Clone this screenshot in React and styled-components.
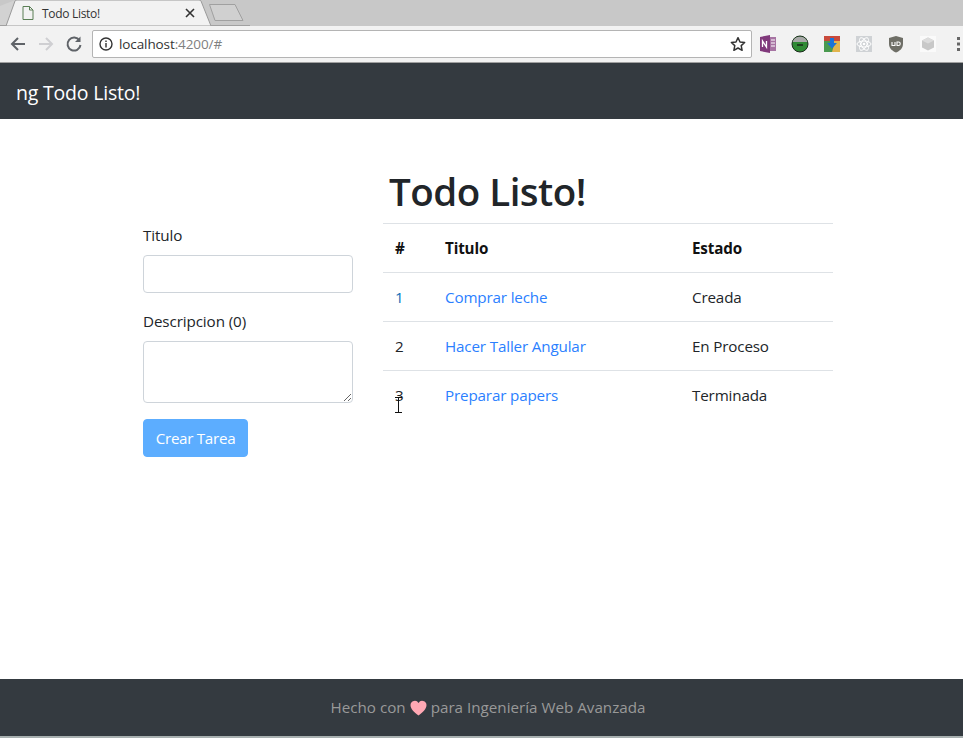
import React from "react";
import styled, { createGlobalStyle } from "styled-components";

const Global = createGlobalStyle`
  html, body { margin: 0; padding: 0; background: #fff; }
  body { font-family: "Open Sans", "Liberation Sans", sans-serif; font-size: 15px; color: #212529; }
  * { box-sizing: border-box; }
`;
const Page = styled.div`
  width: 963px; height: 738px; display: flex; flex-direction: column; overflow: hidden; background: #fff;
`;
const TabStrip = styled.div`
  height: 26px; background: #c8c8c8; display: flex; align-items: flex-end; flex: none; position: relative;
`;
const TabShape = styled.svg`
  position: absolute; left: 0; top: 0; width: 250px; height: 26px;
`;
const TabRow = styled.div`
  position: relative; display: flex; align-items: center; height: 26px; width: 212px; padding-left: 22px;
`;
const TabTitle = styled.span`
  font-size: 12px; color: #333; margin-left: 8px; flex: 1; letter-spacing: -0.3px;
`;
const Toolbar = styled.div`
  height: 37px; flex: none; background: #f2f2f2; border-bottom: 1px solid #a0a0a0;
  display: flex; align-items: center; padding-left: 8px;
`;
const NavIcon = styled.svg`
  width: 20px; height: 20px; flex: none; margin-right: 8px;
`;
const Omnibox = styled.div`
  width: 660px; height: 28px; background: #fff; border: 1px solid #b4b4b4; border-radius: 2px;
  display: flex; align-items: center; padding: 0 5px 0 6px; flex: none; margin-top: -1px;
`;
const Url = styled.span`
  font-size: 13.5px; margin-left: 6px; flex: 1; color: #333; letter-spacing: -0.1px;
  & em { font-style: normal; color: #808080; }
`;
const Extensions = styled.div`
  display: flex; align-items: center; flex: 1; padding-left: 6px; gap: 12px;
`;
const Ext = styled.svg`
  width: 20px; height: 20px; flex: none; display: block;
`;
const MenuDots = styled.svg`
  width: 4px; height: 16px; flex: none; display: block; margin-left: 7px;
`;
const Navbar = styled.header`
  height: 56px; flex: none; background: #343a40; color: #fff; display: flex; align-items: center;
  padding: 2px 0 0 16px; font-size: 19.5px; letter-spacing: -0.2px;
`;
const Main = styled.main`
  flex: 1; display: flex; padding-left: 143px; align-items: flex-start;
`;
const FormCol = styled.form`
  width: 210px; margin-top: 104px; margin-right: 30px; flex: none; display: flex; flex-direction: column;
`;
const Label = styled.label`
  display: block; height: 24px; line-height: 24px; font-size: 15.2px; margin-bottom: 8px; letter-spacing: -0.1px;
`;
const TextInput = styled.input`
  display: block; width: 210px; height: 38px; border: 1px solid #ced4da; border-radius: 4px; background: #fff;
  margin-bottom: 16px; outline: none; padding: 0;
`;
const TextArea = styled.textarea`
  display: block; width: 210px; height: 62px; border: 1px solid #ced4da; border-radius: 4px; background: #fff;
  margin-bottom: 16px; outline: none; padding: 0; resize: vertical;
`;
const Submit = styled.button`
  width: 105px; height: 38px; border: 1px solid #5cadff; border-radius: 4px; background: #5cadff; color: #fff;
  font: inherit; font-size: 15.2px; padding: 0; letter-spacing: -0.3px;
`;
const ListCol = styled.section`
  width: 450px; flex: none; margin-top: 48px;
`;
const Title = styled.h1`
  margin: 0; padding: 0 0 8px 6px; font-size: 38.5px; font-weight: 600; line-height: 48px; color: #212529; letter-spacing: -0.5px;
`;
const Table = styled.table`
  width: 450px; border-collapse: collapse; table-layout: fixed; font-size: 15.2px; color: #212529; letter-spacing: -0.15px;
`;
const Th = styled.th`
  height: 49px; padding: 0 12px; text-align: left; font-weight: 700; border-top: 1px solid #dee2e6; color: #111;
  width: ${p => p.$w}px;
`;
const Td = styled.td`
  height: 49px; padding: 0 12px; border-top: 1px solid #dee2e6; color: ${p => p.$blue ? "#0b6fb8" : "#212529"};
`;
const Link = styled.a`
  color: #2b7fff; text-decoration: none;
`;
const Footer = styled.footer`
  height: 57px; flex: none; background: #343a40; color: #999; display: flex; align-items: center; justify-content: center;
  font-size: 15.2px; padding: 0 0 2px 13px;
`;
const Heart = styled.svg`
  width: 17px; height: 16px; margin: 2px 4px 0; display: block; flex: none;
`;
const BottomEdge = styled.div`
  height: 2px; flex: none; background: #a8b0b0;
`;
const Cursor = styled.svg`
  position: absolute; left: 394px; top: 397px; width: 9px; height: 16px;
`;

const rows = [
  { n: 1, t: "Comprar leche", s: "Creada" },
  { n: 2, t: "Hacer Taller Angular", s: "En Proceso" },
  { n: 3, t: "Preparar papers", s: "Terminada" },
];

export default function App() {
  return (
    <Page>
      <Global />
      <TabStrip>
        <TabShape viewBox="0 0 250 26">
          <path d="M0 6 L14 0.5 L14 26 L0 26Z" fill="#d2d2d2" />
          <path d="M6 26 L15 1 Q15.500 0 17 0 L199 0 Q200.500 0 201 1 L211 26Z" fill="#f2f2f2" stroke="#9a9a9a" strokeWidth="1" />
          <path d="M209.500 4.500 L235 4.500 L243 20.500 L215 20.500Z" fill="#d0d0d0" stroke="#a0a0a0" strokeWidth="1" strokeLinejoin="round" />
          <path d="M0 25.500H6M211 25.500H250" stroke="#a0a0a0" />
        </TabShape>
        <TabRow>
          <svg width="12" height="14" viewBox="0 0 12 14" fill="none" stroke="#5a7f55" strokeWidth="1">
            <path d="M1 .5H7.500L11 4V13.500H1Z" />
            <path d="M7.500 .5V4H11" />
          </svg>
          <TabTitle>Todo Listo!</TabTitle>
          <svg width="10" height="10" viewBox="0 0 10 10" stroke="#333" strokeWidth="1.600" style={{ marginRight: 17 }}>
            <path d="M1 1L9 9M9 1L1 9" />
          </svg>
        </TabRow>
      </TabStrip>
      <Toolbar>
        <NavIcon viewBox="0 0 20 20" fill="none" stroke="#5f6368" strokeWidth="2">
          <path d="M17 10H4M10 4L4 10L10 16" />
        </NavIcon>
        <NavIcon viewBox="0 0 20 20" fill="none" stroke="#cfcfd2" strokeWidth="2">
          <path d="M3 10H16M10 4L16 10L10 16" />
        </NavIcon>
        <NavIcon viewBox="0 0 20 20" fill="none" stroke="#5f6368" strokeWidth="2">
          <path d="M15.500 6.500A6.500 6.500 0 1 0 16.500 11" />
          <path d="M16.500 2.500V8H11" fill="#5f6368" stroke="none" />
        </NavIcon>
        <Omnibox>
          <svg width="14" height="14" viewBox="0 0 14 14" fill="none" stroke="#333" strokeWidth="1.400">
            <circle cx="7" cy="7" r="6" />
            <path d="M7 6V10.500M7 3.400V5" />
          </svg>
          <Url>localhost<em>:4200/#</em></Url>
          <svg width="16" height="16" viewBox="0 0 24 24" fill="none" stroke="#333" strokeWidth="2.200" strokeLinejoin="round">
            <path d="M12 2.500L15 9L22 9.800L16.800 14.500L18.200 21.500L12 18L5.800 21.500L7.200 14.500L2 9.800L9 9Z" />
          </svg>
        </Omnibox>
        <Extensions>
          <Ext viewBox="0 0 20 20">
            <path d="M2 3L12 1V19L2 17Z" fill="#80397b" />
            <rect x="12" y="3" width="6" height="14" fill="#a774a3" />
            <path d="M13 6H17M13 9H17M13 12H17" stroke="#fff" strokeWidth="1" />
            <path d="M4.500 13V7L8.500 13V7" stroke="#fff" strokeWidth="1.300" fill="none" />
          </Ext>
          <Ext viewBox="0 0 20 20">
            <circle cx="10" cy="10" r="8" fill="#2f8a34" stroke="#1b2a1c" strokeWidth="1" />
            <path d="M2.500 8A8 8 0 0 1 17.500 8Z" fill="#a8a8a8" />
            <path d="M7 11H13" stroke="#111" strokeWidth="1.200" />
          </Ext>
          <Ext viewBox="0 0 20 20">
            <rect x="2" y="2" width="16" height="16" fill="#e2b44c" />
            <path d="M2 2H18V7H12V11L10 18H2Z" fill="#4a9a4f" />
            <path d="M2 2H18V7H2Z" fill="#c94a3c" />
            <path d="M8 4H12V9H15L10 14.500L5 9H8Z" fill="#1a73d8" />
          </Ext>
          <Ext viewBox="0 0 20 20">
            <rect x="2" y="2" width="16" height="16" fill="#cfd2d5" />
            <g fill="none" stroke="#fff" strokeWidth="1">
              <ellipse cx="10" cy="10" rx="7" ry="3" />
              <ellipse cx="10" cy="10" rx="7" ry="3" transform="rotate(60 10 10)" />
              <ellipse cx="10" cy="10" rx="7" ry="3" transform="rotate(120 10 10)" />
            </g>
            <circle cx="10" cy="10" r="1.300" fill="#fff" />
          </Ext>
          <Ext viewBox="0 0 20 20">
            <path d="M10 2L17 4V10C17 14.500 13.500 17 10 18.500C6.500 17 3 14.500 3 10V4Z" fill="#6e6e66" />
            <path d="M6 8V11.500H9V8M11 8V11.500H12.500A1.700 1.700 0 0 0 12.500 8Z" fill="none" stroke="#fff" strokeWidth="1.100" />
          </Ext>
          <Ext viewBox="0 0 20 20">
            <rect x="2" y="2" width="16" height="16" fill="#fafafa" />
            <path d="M10 3.500L16 6.500V13.500L10 16.500L4 13.500V6.500Z" fill="#c8c8c8" />
            <path d="M4 6.500L10 9.500L16 6.500L10 3.500Z" fill="#dcdcdc" />
          </Ext>
          <MenuDots viewBox="0 0 4 16" fill="#666">
            <rect x="0" y="1" width="3" height="3" />
            <rect x="0" y="6.500" width="3" height="3" />
            <rect x="0" y="12" width="3" height="3" />
          </MenuDots>
        </Extensions>
      </Toolbar>
      <Navbar>ng Todo Listo!</Navbar>
      <Main>
        <FormCol>
          <Label>Titulo</Label>
          <TextInput />
          <Label>Descripcion (0)</Label>
          <TextArea />
          <Submit type="button">Crear Tarea</Submit>
        </FormCol>
        <ListCol>
          <Title>Todo Listo!</Title>
          <Table>
            <thead>
              <tr>
                <Th $w={50}>#</Th>
                <Th $w={247}>Titulo</Th>
                <Th $w={153}>Estado</Th>
              </tr>
            </thead>
            <tbody>
              {rows.map(r => (
                <tr key={r.n}>
                  <Td $blue={r.n === 1}>{r.n}</Td>
                  <Td><Link href="#">{r.t}</Link></Td>
                  <Td>{r.s}</Td>
                </tr>
              ))}
            </tbody>
          </Table>
        </ListCol>
      </Main>
      <Cursor viewBox="0 0 9 16" fill="none" stroke="#111" strokeWidth="1">
        <path d="M1 .5H8M4.500 .5V15M1 15.500H8" />
      </Cursor>
      <Footer>
        Hecho con
        <Heart viewBox="0 0 17 16">
          <path d="M8.500 15.500C4 12 .5 9 .5 5A4.300 4.300 0 0 1 8.500 3A4.300 4.300 0 0 1 16.500 5C16.500 9 13 12 8.500 15.500Z" fill="#ffa8b4" />
        </Heart>
        para Ingeniería Web Avanzada
      </Footer>
      <BottomEdge />
    </Page>
  );
}
